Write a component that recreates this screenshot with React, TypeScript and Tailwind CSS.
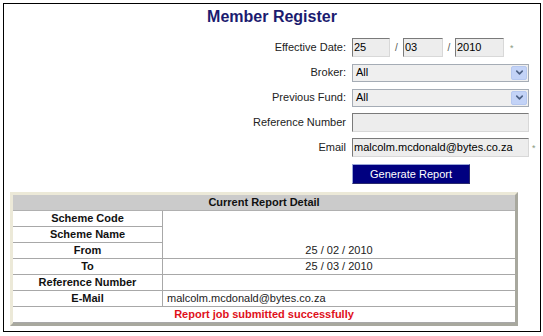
import { ChevronDown } from "lucide-react";

const font = "font-['Liberation_Sans',Arial,sans-serif]";

type DetailRow = {
  label: string;
  value?: string;
  align?: "center" | "left";
  empty?: boolean;
};

const detailRows: DetailRow[] = [
  { label: "Scheme Code", empty: true },
  { label: "Scheme Name", empty: true },
  { label: "From", value: "25 / 02 / 2010" },
  { label: "To", value: "25 / 03 / 2010" },
  { label: "Reference Number", value: "" },
  { label: "E-Mail", value: "malcolm.mcdonald@bytes.co.za", align: "left" },
];

const inputBox =
  "h-[19px] border border-t-[#7a7a7a] border-l-[#7a7a7a] border-r-[#d8d8d8] border-b-[#d8d8d8] bg-[#ededed] px-[1px] text-[11px] leading-[17px] text-black";

const Label = ({ children }: { children: React.ReactNode }) => (
  <div className="text-right text-[11px] leading-[19px] text-[#222]">{children}</div>
);

const Select = ({ value }: { value: string }) => (
  <div className="flex h-[18px] w-[177px] items-center border border-[#a5acb5] bg-[#efefef]">
    <span className="flex-1 pl-[3px] text-[11px] text-black">{value}</span>
    <div className="mr-[1px] flex h-[14px] w-[16px] items-center justify-center rounded-[2px] border border-[#b6c8f0] bg-[#c3d3f7]">
      <ChevronDown size={11} strokeWidth={3.5} className="text-[#4d6185]" />
    </div>
  </div>
);

const Star = () => <span className="text-[9px] leading-none text-[#8a9a80]">*</span>;

const App = () => {
  return (
    <div className={`h-[336px] w-[543px] bg-white p-[3px] ${font}`}>
      <div className="h-[329px] w-[538px] border border-black">
        <h1 className="mt-[4px] text-center text-[16px] font-bold leading-[18px] text-[#1b1b6f]">
          Member Register
        </h1>

        <div className="mt-[12px] grid grid-cols-[342px_auto] grid-rows-[19px_19px_19px_19px_19px_20px] items-center gap-x-[6px] gap-y-[6px] text-[11px] leading-[19px]">
          <Label>Effective Date:</Label>
          <div className="flex h-[19px] items-center">
            <div className={`${inputBox} w-[38px]`}>25</div>
            <span className="w-[13px] text-center text-[10px] text-[#555]">/</span>
            <div className={`${inputBox} w-[40px]`}>03</div>
            <span className="w-[12px] text-center text-[10px] text-[#555]">/</span>
            <div className={`${inputBox} w-[49px]`}>2010</div>
            <span className="ml-[6px] leading-none">
              <Star />
            </span>
          </div>

          <Label>Broker:</Label>
          <Select value="All" />

          <Label>Previous Fund:</Label>
          <Select value="All" />

          <Label>Reference Number</Label>
          <div className={`${inputBox} w-[177px]`} />

          <Label>Email</Label>
          <div className="flex h-[19px] items-center">
            <div className={`${inputBox} w-[177px]`}>malcolm.mcdonald@bytes.co.za</div>
            <span className="ml-[3px] leading-none">
              <Star />
            </span>
          </div>

          <div />
          <button className="mt-[1px] h-[20px] w-[118px] border border-t-[#9aa7d8] border-l-[#9aa7d8] border-r-[#2a2a6a] border-b-[#2a2a6a] bg-[#000080] text-[11px] leading-[18px] text-white">
            Generate Report
          </button>
        </div>

        <div className="ml-[6px] mt-[9px] w-[508px] border-[3px] border-t-[#ece9d8] border-l-[#ece9d8] border-r-[#a8a89e] border-b-[#a8a89e] bg-[#ece9d8]">
          <div className="h-[16px] border-b border-[#b0b0b0] bg-[#cbcbcb] text-center text-[11px] font-bold leading-[15px] text-[#111]">
            Current Report Detail
          </div>
          {detailRows.map((row) => (
            <div key={row.label} className="flex h-[16px] bg-white text-[11px] leading-[15px]">
              <div className="w-[150px] border-b border-r border-[#a8a8a8] text-center font-bold text-[#111]">
                {row.label}
              </div>
              <div
                className={`flex-1 ${row.empty ? "" : "border-b border-[#a8a8a8]"} ${
                  row.align === "left" ? "pl-[4px] text-left" : "text-center"
                } text-[#222]`}
              >
                {row.value}
              </div>
            </div>
          ))}
          <div className="h-[16px] border-b border-[#a8a8a8] bg-white text-center text-[11px] font-bold leading-[15px] text-[#e0101a]">
            Report job submitted successfully
          </div>
        </div>
      </div>
    </div>
  );
};

export default App;
